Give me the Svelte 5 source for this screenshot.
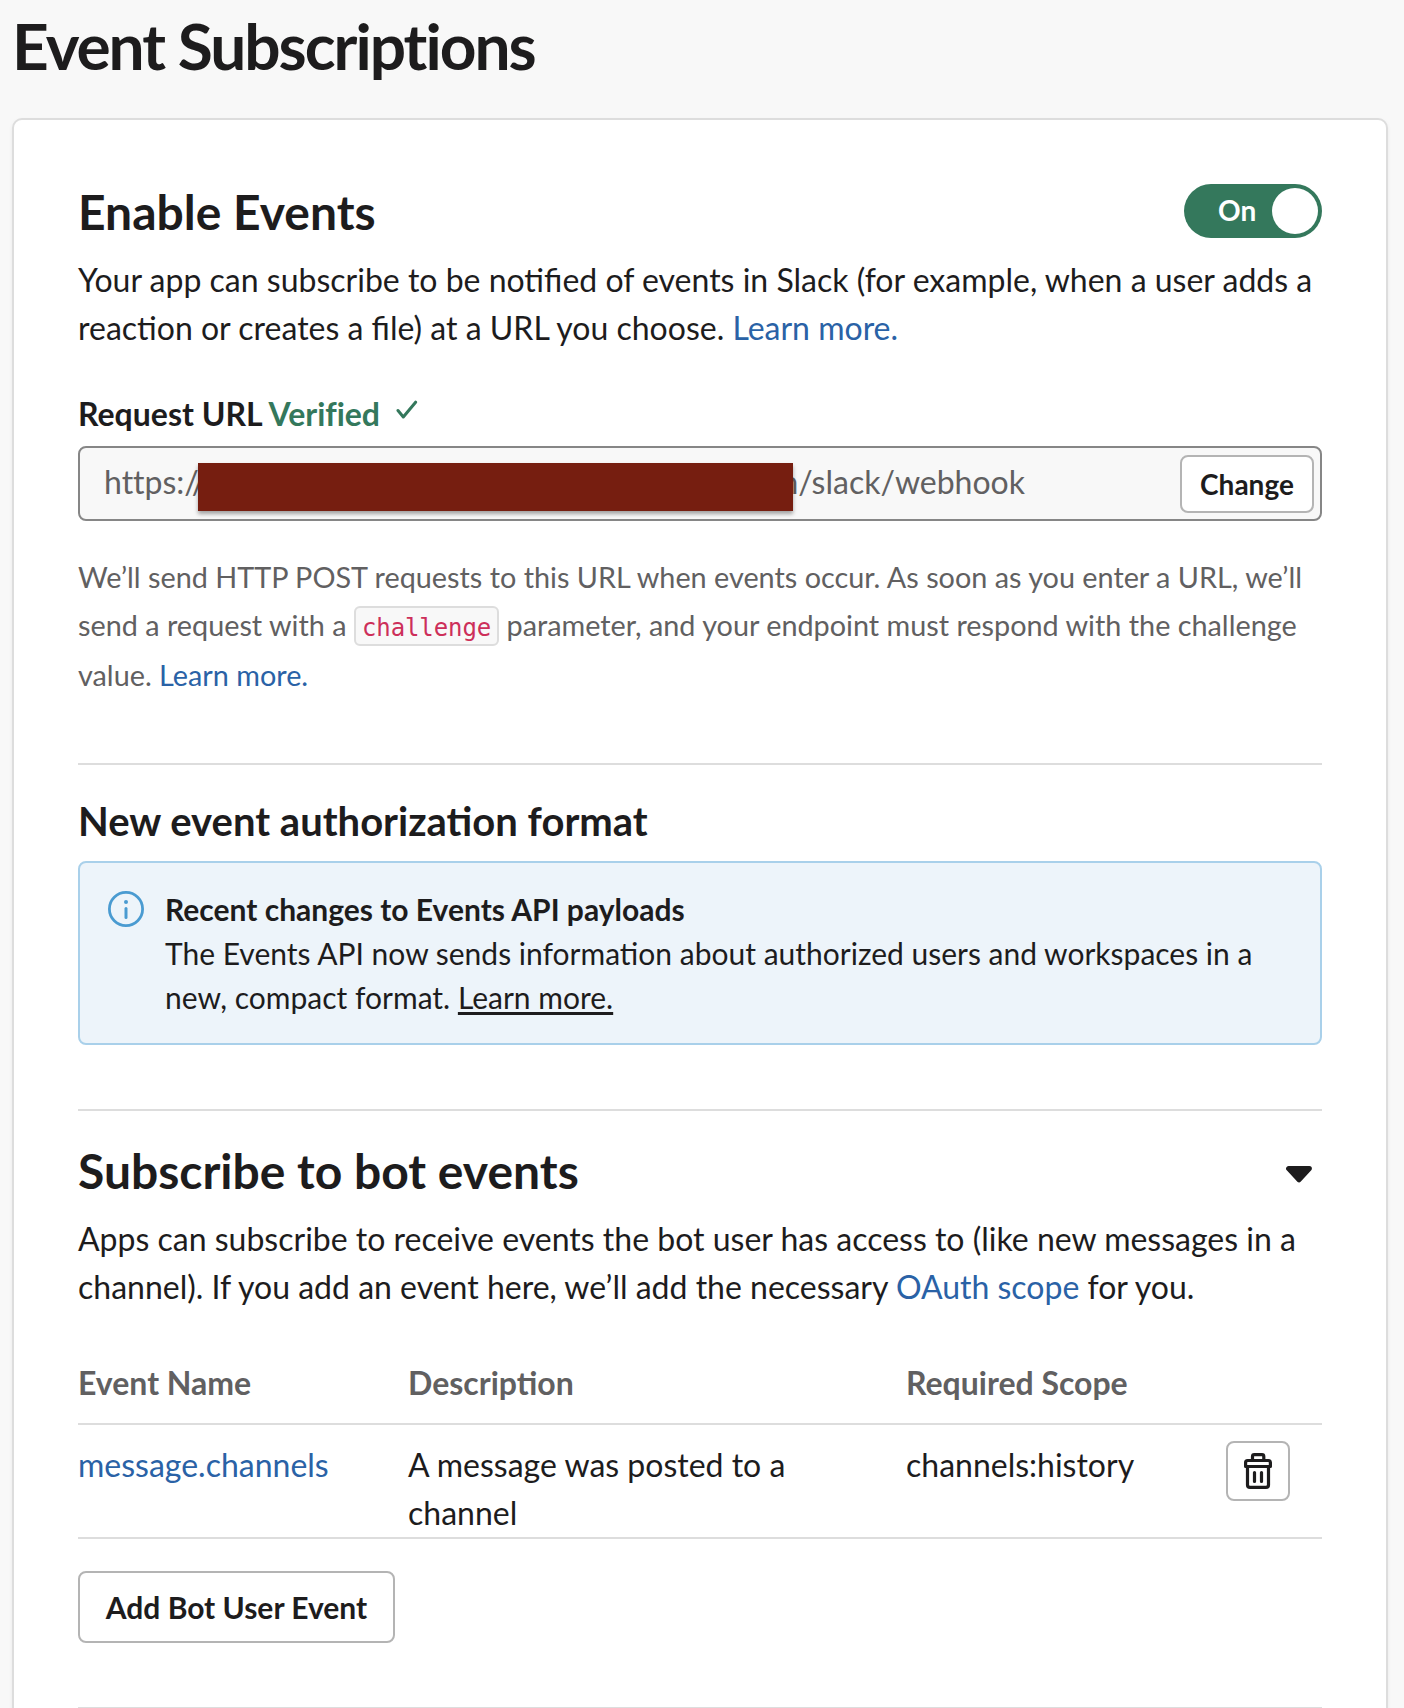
<script>
  let enabled = $state(true);

  const events = [
    {
      name: 'message.channels',
      description: 'A message was posted to a channel',
      scope: 'channels:history'
    }
  ];
</script>

<main class="page">
  <h1>Event Subscriptions</h1>

  <div class="card">
    <section>
      <header class="section-head">
        <h2>Enable Events</h2>
        <button class="toggle" role="switch" aria-checked={enabled} onclick={() => (enabled = !enabled)}>
          <span class="toggle-label">{enabled ? 'On' : 'Off'}</span>
          <span class="knob"></span>
        </button>
      </header>
      <p>
        Your app can subscribe to be notified of events in Slack (for example, when a user adds a
        reaction or creates a file) at a URL you choose. <a href="#learn">Learn more.</a>
      </p>

      <div class="label">
        <span>Request URL</span>
        <span class="verified">Verified</span>
        <svg class="check" width="22" height="20" viewBox="0 0 22 20" aria-hidden="true">
          <path d="M2 10.5 L7.3 17 L19.6 2.2" />
        </svg>
      </div>
      <div class="url-field">
        <span class="url-start">https://</span>
        <span class="redaction"></span>
        <span class="url-end">m/slack/webhook</span>
        <button class="btn change">Change</button>
      </div>
      <p class="hint">
        We’ll send HTTP POST requests to this URL when events occur. As soon as you enter a URL, we’ll
        send a request with a <code>challenge</code> parameter, and your endpoint must respond with the challenge
        value. <a href="#learn">Learn more.</a>
      </p>
    </section>

    <section class="format">
      <h3>New event authorization format</h3>
      <div class="notice">
        <svg class="info" width="36" height="36" viewBox="0 0 36 36" aria-hidden="true">
          <circle class="ring" cx="18" cy="18" r="16.6" />
          <circle class="dot" cx="18" cy="11" r="2" />
          <path class="stem" d="M18 17.5 V26.5" />
        </svg>
        <div>
          <strong>Recent changes to Events API payloads</strong>
          <p>
            The Events API now sends information about authorized users and workspaces in a
            new, compact format. <a href="#learn">Learn more.</a>
          </p>
        </div>
      </div>
    </section>

    <section class="bot">
      <header class="section-head">
        <h2>Subscribe to bot events</h2>
        <svg class="caret" width="26" height="17" viewBox="0 0 26 17" aria-hidden="true">
          <path d="M2.6 2.6 H23.4 L13 13.9 Z" />
        </svg>
      </header>
      <p>
        Apps can subscribe to receive events the bot user has access to (like new messages in a
        channel). If you add an event here, we’ll add the necessary <a href="#scope">OAuth scope</a> for you.
      </p>

      <div class="row head">
        <span>Event Name</span>
        <span>Description</span>
        <span>Required Scope</span>
      </div>
      {#each events as event}
        <div class="row">
          <a href="#event">{event.name}</a>
          <span class="description">{event.description}</span>
          <span>{event.scope}</span>
          <button class="btn trash" aria-label="Delete event">
            <svg width="28" height="36" viewBox="0 0 28 36" aria-hidden="true">
              <path d="M8.5 7.5 V3.5 Q8.5 1.7 10.3 1.7 H18 Q19.8 1.7 19.8 3.5 V7.5" />
              <path d="M1.6 13.5 V9.5 Q1.6 7.5 3.6 7.5 H24.4 Q26.4 7.5 26.4 9.5 V13.5 Z" />
              <path d="M3.5 13.5 V32 Q3.5 34.4 6 34.4 H22 Q24.5 34.4 24.5 32 V13.5" />
              <path d="M10.5 19.5 V28.5 M17.5 19.5 V28.5" />
            </svg>
          </button>
        </div>
      {/each}
      <button class="btn add">Add Bot User Event</button>
    </section>

    <section class="next"></section>
  </div>
</main>

<style>
  :global(body) {
    margin: 0;
    background: #f8f8f8;
  }

  .page {
    box-sizing: border-box;
    width: 1404px;
    height: 1708px;
    overflow: hidden;
    padding: 6px 16px 0 12px;
    font: 32px/48px Lato, sans-serif;
    color: #1d1c1d;
  }

  h1,
  h2,
  h3,
  p {
    margin: 0;
  }

  h1 {
    height: 112px;
    font-size: 64px;
    line-height: 80px;
    font-weight: 700;
    letter-spacing: -2px;
  }

  h2 {
    font-size: 48px;
    line-height: 56px;
    font-weight: 700;
  }

  h3 {
    font-size: 40px;
    line-height: 48px;
    font-weight: 700;
  }

  a {
    color: #2a62a6;
    text-decoration: none;
  }

  button {
    margin: 0;
    padding: 0;
    font-family: inherit;
    color: inherit;
    cursor: pointer;
  }

  .card {
    box-sizing: border-box;
    height: 1700px;
    padding: 64px;
    border: 2px solid #ddd;
    border-radius: 10px;
    background: #fff;
    box-shadow: 0 2px 4px rgba(0, 0, 0, 0.06);
  }

  .section-head {
    display: flex;
    justify-content: space-between;
    height: 56px;
    margin-bottom: 16px;
  }

  .toggle {
    box-sizing: border-box;
    display: flex;
    justify-content: space-between;
    width: 138px;
    height: 54px;
    padding: 4px 4px 4px 34px;
    border: 0;
    border-radius: 27px;
    background: #34785c;
  }

  .toggle-label {
    font-size: 28px;
    line-height: 44px;
    font-weight: 700;
    color: #fff;
  }

  .knob {
    width: 46px;
    height: 46px;
    border-radius: 50%;
    background: #fff;
  }

  .label {
    display: flex;
    gap: 6px;
    margin: 38px 0 8px;
    font-weight: 700;
  }

  .verified {
    color: #34785c;
    letter-spacing: -0.05px;
    font-variant-ligatures: common-ligatures;
  }

  .check {
    margin: 10px 0 0 10px;
    fill: none;
    stroke: #34785c;
    stroke-width: 3;
    stroke-linecap: round;
    stroke-linejoin: round;
  }

  .url-field {
    box-sizing: border-box;
    display: flex;
    height: 75px;
    padding: 7px 6px 7px 24px;
    border: 2px solid #868686;
    border-radius: 8px;
    background: #f8f8f8;
    color: #616061;
    font-variant-ligatures: none;
  }

  .url-start {
    width: 94px;
    padding-top: 3px;
    white-space: nowrap;
  }

  .redaction {
    z-index: 1;
    width: 595px;
    height: 48px;
    margin-top: 8px;
    background: #761e10;
    box-shadow: 0 3px 4px rgba(0, 0, 0, 0.35);
  }

  .url-end {
    flex: 1;
    margin-left: -21px;
    padding-top: 3px;
  }

  .btn {
    box-sizing: border-box;
    border: 2px solid #b4b4b4;
    border-radius: 8px;
    background: #fff;
    color: #1d1c1d;
    font-weight: 700;
  }

  .change {
    width: 134px;
    height: 58px;
    padding-bottom: 1px;
    font-size: 28px;
  }

  .hint {
    height: 146px;
    margin-top: 32px;
    font-size: 28.8px;
    color: #616061;
  }

  code {
    padding: 6px 6px 2px;
    border: 2px solid #ddd;
    border-radius: 6px;
    background: #f8f8f8;
    font: 24px/46px 'DejaVu Sans Mono', monospace;
    letter-spacing: -0.1px;
    color: #cd2f5a;
  }

  .format {
    margin-top: 64px;
    padding-top: 32px;
    border-top: 2px solid #ddd;
  }

  .notice {
    box-sizing: border-box;
    display: flex;
    gap: 21px;
    height: 184px;
    margin-top: 16px;
    padding: 24px 28px;
    border: 2px solid #a9d0ea;
    border-radius: 8px;
    background: #edf4fa;
    font-size: 30px;
    line-height: 44px;
  }

  .notice strong {
    display: block;
  }

  .notice a {
    color: inherit;
    text-decoration: underline;
    text-decoration-thickness: 3px;
    text-underline-offset: 3px;
    text-decoration-skip-ink: none;
  }

  .info {
    flex: none;
    margin-top: 4px;
  }

  .ring {
    fill: none;
    stroke: #4a9bd1;
    stroke-width: 2.8;
  }

  .dot {
    fill: #4a9bd1;
  }

  .stem {
    stroke: #4a9bd1;
    stroke-width: 3;
    stroke-linecap: round;
  }

  .bot {
    margin-top: 64px;
    padding-top: 32px;
    border-top: 2px solid #ddd;
  }

  .caret {
    margin: 23px 10.5px 0 0;
    fill: #1d1c1d;
    stroke: #1d1c1d;
    stroke-width: 5;
    stroke-linejoin: round;
  }

  .row {
    box-sizing: border-box;
    display: grid;
    grid-template-columns: 330px 498px 320px 64px;
    height: 114px;
    padding-top: 16px;
    border-bottom: 2px solid #ddd;
  }

  .head {
    height: 66px;
    margin-top: 48px;
    padding: 0;
    font-weight: 700;
    color: #616061;
  }

  .description {
    padding-right: 100px;
  }

  .trash {
    display: flex;
    align-items: center;
    justify-content: center;
    height: 60px;
  }

  .trash svg {
    fill: none;
    stroke: #1d1c1d;
    stroke-width: 3.2;
    stroke-linecap: round;
    stroke-linejoin: round;
  }

  .add {
    display: block;
    width: 317px;
    height: 72px;
    margin-top: 32px;
    padding-bottom: 1px;
    font-size: 30px;
  }

  .next {
    margin-top: 64px;
    border-top: 2px solid #ddd;
  }
</style>
